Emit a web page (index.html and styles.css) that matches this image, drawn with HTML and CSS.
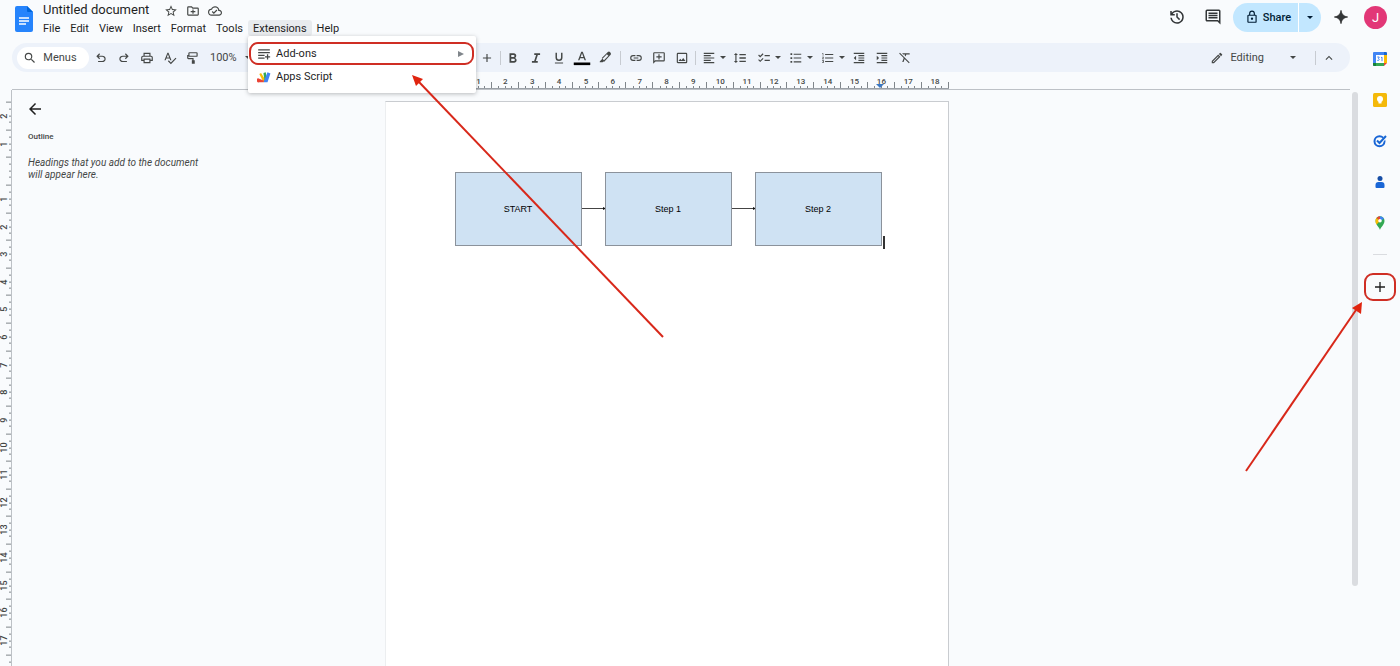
FILE: index.html
```html
<!DOCTYPE html>
<html lang="en">
<head>
<meta charset="utf-8">
<meta name="viewport" content="width=device-width, initial-scale=1">
<title>Untitled document</title>
<link rel="stylesheet" href="styles.css">
</head>
<body>
<div class="app">
  <header class="header">
    <a class="logo" href="#" aria-label="Docs home">
      <svg viewBox="0 0 18 26" width="18" height="26"><path fill="#2684fc" d="M2 0h10l6 6v18a2 2 0 0 1-2 2H2a2 2 0 0 1-2-2V2a2 2 0 0 1 2-2z"/><path fill="#0066da" d="M12 0l6 6h-5a1 1 0 0 1-1-1z"/><path stroke="#fff" stroke-width="1.4" d="M4 12h10M4 15h10M4 18h7"/></svg>
    </a>
    <div class="heading">
      <div class="title-row">
        <h1 class="title">Untitled document</h1>
        <button class="tiny" aria-label="Star"><svg class="ic14" viewBox="0 0 24 24"><path d="M22 9.24l-7.19-.62L12 2 9.19 8.63 2 9.24l5.46 4.73L5.82 21 12 17.27 18.18 21l-1.63-7.03L22 9.24zM12 15.4l-3.76 2.27 1-4.28-3.32-2.88 4.38-.38L12 6.1l1.71 4.04 4.38.38-3.32 2.88 1 4.28L12 15.4z"/></svg></button>
        <button class="tiny" aria-label="Move"><svg class="ic14" viewBox="0 0 24 24"><path d="M20 6h-8l-2-2H4a2 2 0 0 0-2 2v12a2 2 0 0 0 2 2h16a2 2 0 0 0 2-2V8a2 2 0 0 0-2-2zm0 12H4V6h5.2l2 2H20zM11 9.500h2V12h3v2h-3v2.500h-2V14H8v-2h3z"/></svg></button>
        <button class="tiny" aria-label="Document status"><svg class="ic14" viewBox="0 0 24 24"><path d="M19.350 10.040A7.490 7.490 0 0 0 12 4C9.110 4 6.600 5.640 5.350 8.040A5.994 5.994 0 0 0 0 14c0 3.310 2.690 6 6 6h13c2.760 0 5-2.240 5-5 0-2.640-2.050-4.780-4.650-4.960zM19 18H6c-2.210 0-4-1.790-4-4s1.790-4 4-4h.71A5.500 5.500 0 0 1 17.500 11.500v.5H19c1.660 0 3 1.340 3 3s-1.340 3-3 3zM10 14.200l-2.100-2.100-1.400 1.400L10 17l6-6-1.400-1.400z"/></svg></button>
      </div>
      <nav class="menubar" aria-label="Menu bar">
        <button class="menu">File</button>
        <button class="menu">Edit</button>
        <button class="menu">View</button>
        <button class="menu">Insert</button>
        <button class="menu">Format</button>
        <button class="menu">Tools</button>
        <div class="menu-wrap">
          <button class="menu menu-open" aria-expanded="true">Extensions</button>
          <div class="dropdown" role="menu">
            <button class="entry entry-marked" role="menuitem">
              <svg class="ic14" viewBox="0 0 24 24"><path d="M2 4h20v2.200H2zM2 8.700h20v2.200H2zM2 13.400h11v2.200H2zM2 18h11v2.200H2zM17 12.500h2.200v3.300h3.300V18h-3.300v3.300H17V18h-3.300v-2.200H17z"/></svg>
              <span>Add-ons</span>
              <svg class="arrow" viewBox="0 0 6 6" width="6" height="6"><path d="M0 0l6 3-6 3z"/></svg>
            </button>
            <button class="entry" role="menuitem">
              <svg class="ic14" viewBox="0 0 24 24"><path fill="#fbbc04" d="M4 7l3-2 8 13-4 3z"/><path fill="#34a853" d="M11 5l4-1 2 12-4 3z"/><path fill="#4285f4" d="M18 4l5 2-5 15h-7z"/><path fill="#ea4335" d="M2 14l10 4.500-1 2.500H4a3 3 0 0 1-2-7z"/></svg>
              <span>Apps Script</span>
            </button>
          </div>
        </div>
        <button class="menu">Help</button>
      </nav>
    </div>
    <div class="actions">
      <button class="action" aria-label="Version history"><svg class="ic18" viewBox="0 0 24 24"><path d="M12 21q-3.450 0-6.012-2.287T3.050 13H5.100q.35 2.600 2.313 4.300T12 19q2.925 0 4.963-2.037T19 12t-2.037-4.962T12 5q-1.725 0-3.225.8T6.250 8H9v2H3V4h2v2.350q1.275-1.600 3.113-2.475T12 3q1.875 0 3.513.713t2.850 1.924 1.925 2.850T21 12t-.712 3.513-1.925 2.850-2.850 1.925T12 21m2.800-4.800L11 12.400V7h2v4.600l3.200 3.200z"/></svg></button>
      <button class="action" aria-label="Comments"><svg class="ic18" viewBox="0 0 24 24"><path d="M22 4a2 2 0 0 0-2-2H4a2 2 0 0 0-2 2v12c0 1.100.9 2 2 2h14l4 4zm-2 13.200L18.800 16H4V4h16zM6 12h12v2H6zm0-3h12v2H6zm0-3h12v2H6z"/></svg></button>
      <div class="share">
        <button class="share-main"><svg class="ic14" viewBox="0 0 24 24"><path d="M18 8h-1V6A5 5 0 0 0 7 6v2H6a2 2 0 0 0-2 2v10c0 1.100.9 2 2 2h12a2 2 0 0 0 2-2V10a2 2 0 0 0-2-2zM9 6a3 3 0 0 1 6 0v2H9zm9 14H6V10h12zm-6-3a2 2 0 1 0 0-4 2 2 0 0 0 0 4z"/></svg>Share</button>
        <button class="share-more" aria-label="Sharing options"><i class="caret"></i></button>
      </div>
      <button class="action" aria-label="Gemini"><svg class="ic16" viewBox="0 0 24 24"><path d="M12 2c.8 6 4 9.200 10 10-6 .8-9.200 4-10 10-.8-6-4-9.200-10-10 6-.8 9.200-4 10-10z" stroke="#1f1f1f"/></svg></button>
      <button class="avatar" aria-label="Account">J</button>
    </div>
  </header>

  <div class="body">
    <main class="main">
      <div class="toolbar" role="toolbar" aria-label="Formatting">
        <button class="search"><svg class="ic14" viewBox="0 0 24 24"><path d="M15.500 14h-.79l-.28-.27A6.470 6.470 0 0 0 16 9.500 6.500 6.500 0 1 0 9.500 16c1.610 0 3.090-.59 4.230-1.570l.27.28v.79l5 4.990L20.490 19zm-6 0a4.500 4.500 0 1 1 0-9 4.500 4.500 0 0 1 0 9z"/></svg>Menus</button>
        <button class="tool" aria-label="Undo"><svg class="ic14" viewBox="0 0 24 24"><path d="M7 19v-2h7.100q1.575 0 2.738-1T18 13.500 16.838 11 14.100 10H7.800l2.600 2.600L9 14 4 9l5-5 1.400 1.400L7.800 8h6.300q2.425 0 4.163 1.575T20 13.500t-1.737 3.925T14.100 19z"/></svg></button>
        <button class="tool" aria-label="Redo"><svg class="ic14" viewBox="0 0 24 24"><path d="M17 19v-2H9.900q-1.575 0-2.738-1T6 13.500 7.162 11 9.900 10h6.300l-2.600 2.600L15 14l5-5-5-5-1.400 1.400L16.200 8H9.900q-2.425 0-4.163 1.575T4 13.500t1.737 3.925T9.900 19z"/></svg></button>
        <button class="tool" aria-label="Print"><svg class="ic14" viewBox="0 0 24 24"><path d="M19 8h-1V3H6v5H5a3 3 0 0 0-3 3v6h4v4h12v-4h4v-6a3 3 0 0 0-3-3zM8 5h8v3H8zm8 14H8v-4h8zm2-4v-2H6v2H4v-4a1 1 0 0 1 1-1h14a1 1 0 0 1 1 1v4z"/></svg></button>
        <button class="tool" aria-label="Spelling check"><svg class="ic14" viewBox="0 0 24 24"><path d="M12.450 16h2.090L9.430 3H7.570L2.460 16h2.090l1.120-3h5.640zm-6.020-5L8.500 5.480 10.570 11zM21.590 11.590l-8.090 8.090L9.830 16l-1.410 1.410 5.090 5.090L23 13z"/></svg></button>
        <button class="tool" aria-label="Paint format"><svg class="ic14" viewBox="0 0 24 24"><path d="M18 2H6a2 2 0 0 0-2 2v4a2 2 0 0 0 2 2h12a2 2 0 0 0 2-2h0V4a2 2 0 0 0-2-2zm0 6H6V4h12zM2 5h2v2H2zM2 5v7a2 2 0 0 0 2 2h7v2h-1v6h5v-6h-2v-4H4V5z"/></svg></button>
        <button class="zoom">100%<i class="caret"></i></button>
        <div class="gap"></div>
        <button class="tool" aria-label="Increase font size"><svg class="ic14" viewBox="0 0 24 24"><path d="M19 13h-6v6h-2v-6H5v-2h6V5h2v6h6z"/></svg></button>
        <span class="sep"></span>
        <button class="tool" aria-label="Bold"><svg class="ic14" viewBox="0 0 24 24"><path d="M15.600 11.790A4.200 4.200 0 0 0 17.600 8.300C17.600 5.900 15.800 4 13.300 4H6v16h7.900c2.300 0 4.300-1.900 4.300-4.300 0-1.700-1-3.200-2.600-3.910zM9 6.700h3.800a1.800 1.800 0 0 1 0 3.600H9zm4.300 10.500H9v-3.900h4.300a1.950 1.950 0 0 1 0 3.900z"/></svg></button>
        <button class="tool" aria-label="Italic"><svg class="ic14" viewBox="0 0 24 24"><path d="M9 4v2.700h3.200L8.800 17.300H5V20h10v-2.700h-3.200l3.400-10.600H19V4z"/></svg></button>
        <button class="tool" aria-label="Underline"><svg class="ic14" viewBox="0 0 24 24"><path d="M12 17a6 6 0 0 0 6-6V3h-2.500v8a3.500 3.500 0 0 1-7 0V3H6v8a6 6 0 0 0 6 6zM5 19.500v2h14v-2z"/></svg></button>
        <button class="tool" aria-label="Text color"><svg class="ic18" viewBox="0 0 24 24"><path d="M6.700 15h1.900l1-2.700h4.800l1 2.700h1.900L13 3.500h-2zm3.500-4.300L12 5.700l1.800 5z"/><path fill="#000" d="M1 18h22v3.500H1z"/></svg></button>
        <button class="tool" aria-label="Highlight color"><svg class="ic14 lift" viewBox="0 0 24 24"><path d="M20.500 3.500a2.500 2.500 0 0 0-3.600 0L6.500 13.800l.9 1.400L3 19.600V21h5l1.500-1.500 1.200.5L20.500 9.500a4 4 0 0 0 0-6zm-10.300 14l-2.500-2.600 7.500-7.500 2.600 2.600z"/></svg></button>
        <span class="sep sep-wide"></span>
        <button class="tool" aria-label="Insert link"><svg class="ic14" viewBox="0 0 24 24"><path d="M3.900 12A3.100 3.100 0 0 1 7 8.900h4V7H7a5 5 0 0 0 0 10h4v-1.900H7A3.100 3.100 0 0 1 3.900 12zM8 13h8v-2H8zm9-6h-4v1.900h4a3.100 3.100 0 0 1 0 6.200h-4V17h4a5 5 0 0 0 0-10z"/></svg></button>
        <button class="tool" aria-label="Add comment"><svg class="ic14" viewBox="0 0 24 24"><path d="M20 2H4a2 2 0 0 0-2 2v18l4-4h14a2 2 0 0 0 2-2V4a2 2 0 0 0-2-2zm0 14H5.200L4 17.200V4h16zM11 5.500h2V9h3.500v2H13v3.500h-2V11H7.500V9H11z"/></svg></button>
        <button class="tool" aria-label="Insert image"><svg class="ic14" viewBox="0 0 24 24"><path d="M19 5v14H5V5zm0-2H5a2 2 0 0 0-2 2v14c0 1.100.9 2 2 2h14a2 2 0 0 0 2-2V5a2 2 0 0 0-2-2zm-4.900 8.900l-3 3.800L9 13.200 6 17h12z"/></svg></button>
        <span class="sep"></span>
        <button class="tool tool-menu" aria-label="Align"><svg class="ic14" viewBox="0 0 24 24"><path d="M3 3h18v2H3zm0 4h12v2H3zm0 4h18v2H3zm0 4h12v2H3zm0 4h18v2H3z"/></svg><i class="caret"></i></button>
        <button class="tool" aria-label="Line spacing"><svg class="ic14" viewBox="0 0 24 24"><path d="M6 7h2.500L5 3.500 1.500 7H4v10H1.500L5 20.500 8.500 17H6zm5-2v2.200h11V5zm0 14h11v-2.200H11zm0-5.900h11v-2.200H11z"/></svg></button>
        <button class="tool tool-menu" aria-label="Checklist"><svg class="ic14" viewBox="0 0 24 24"><path d="M22 7h-9v2h9zm0 8h-9v2h9zM5.500 11L2 7.500l1.400-1.400 2.100 2.100 4.300-4.200 1.400 1.400zm0 8L2 15.500l1.400-1.400 2.100 2.100 4.300-4.200 1.400 1.400z"/></svg><i class="caret"></i></button>
        <button class="tool tool-menu" aria-label="Bulleted list"><svg class="ic14" viewBox="0 0 24 24"><path d="M2.500 4h3v3h-3zm0 6.500h3v3h-3zm0 6.500h3v3h-3zM8 4.500h13v2H8zM8 11h13v2H8zm0 6.500h13v2H8z"/></svg><i class="caret"></i></button>
        <button class="tool tool-menu" aria-label="Numbered list"><svg class="ic14" viewBox="0 0 24 24"><path d="M2 17h2v.5H3v1h1v.5H2v1h3v-4H2zm1-9h1V4H2v1h1zm-1 3h1.800L2 13.100v.9h3v-1H3.200L5 10.900V10H2zm5-6v2h14V5zm0 14h14v-2H7zm0-6h14v-2H7z"/></svg><i class="caret"></i></button>
        <button class="tool" aria-label="Decrease indent"><svg class="ic14" viewBox="0 0 24 24"><path d="M11 17h10v-2H11zm-8-5l4 4V8zm0 9h18v-2H3zM3 3v2h18V3zm8 6h10V7H11zm0 4h10v-2H11z"/></svg></button>
        <button class="tool" aria-label="Increase indent"><svg class="ic14" viewBox="0 0 24 24"><path d="M3 21h18v-2H3zM3 8v8l4-4zm8 9h10v-2H11zM3 3v2h18V3zm8 6h10V7H11zm0 4h10v-2H11z"/></svg></button>
        <button class="tool" aria-label="Clear formatting"><svg class="ic14" viewBox="0 0 24 24"><path d="M20 6V4H7l2 2h3.100l-.6 1.900 1.500 1.500L14.200 6zM3.300 3L2 4.300l7.800 7.800L7.300 19h2.200l1.900-5.300L18.700 21l1.300-1.300z"/></svg></button>
        <button class="mode"><svg class="ic14" viewBox="0 0 24 24"><path d="M3 17.200V21h3.800L17.900 9.900l-3.800-3.800zM20.700 7c.4-.4.4-1 0-1.400l-2.300-2.300a1 1 0 0 0-1.400 0l-1.800 1.800L19 8.900zM6 19H5v-1l9-9 1 1z"/></svg><span>Editing</span><i class="caret"></i></button>
        <span class="sep"></span>
        <button class="tool" aria-label="Hide the menus"><svg class="ic14" viewBox="0 0 24 24"><path d="M12 8l-6 6 1.400 1.400 4.600-4.600 4.600 4.600L18 14z"/></svg></button>
      </div>

      <div class="ruler-row">
        <div class="ruler">
          <span></span><span></span><span></span><span>1</span><span>2</span><span>3</span><span>4</span><span>5</span><span>6</span><span>7</span><span>8</span><span>9</span><span>10</span><span>11</span><span>12</span><span>13</span><span>14</span><span>15</span><span class="marked">16</span><span>17</span><span>18</span>
        </div>
      </div>

      <div class="workspace">
        <div class="side-ruler">
          <div class="side-scale">
            <span>2</span><span>1</span><span></span><span>1</span><span>2</span><span>3</span><span>4</span><span>5</span><span>6</span><span>7</span><span>8</span><span>9</span><span>10</span><span>11</span><span>12</span><span>13</span><span>14</span><span>15</span><span>16</span><span>17</span><span></span>
          </div>
        </div>
        <div class="canvas">
          <aside class="outline">
            <button class="back" aria-label="Close outline"><svg class="ic18" viewBox="0 0 24 24"><path d="M20 11H7.800l5.600-5.600L12 4l-8 8 8 8 1.400-1.400L7.800 13H20z"/></svg></button>
            <h2 class="outline-title">Outline</h2>
            <p class="outline-hint">Headings that you add to the document will appear here.</p>
          </aside>
          <article class="page">
            <div class="flow">
              <div class="node">START</div>
              <svg class="link" viewBox="0 0 24 6" width="24" height="6"><path d="M0 2.500h22" stroke="#444"/><path d="M21 1l3 1.500-3 1.500z" fill="#111"/></svg>
              <div class="node">Step 1</div>
              <svg class="link" viewBox="0 0 24 6" width="24" height="6"><path d="M0 2.500h22" stroke="#444"/><path d="M21 1l3 1.500-3 1.500z" fill="#111"/></svg>
              <div class="node">Step 2</div>
              <i class="cursor"></i>
            </div>
          </article>
        </div>
      </div>
    </main>

    <div class="scroll"><div class="thumb"></div></div>

    <aside class="rail" aria-label="Side panel">
      <button class="app-btn" aria-label="Calendar"><svg class="ic14" viewBox="0 0 14 14"><path fill="#4285f4" d="M1 0h12v3H3v11H1a1 1 0 0 1-1-1V1a1 1 0 0 1 1-1z"/><path fill="#1967d2" d="M11 0h2a1 1 0 0 1 1 1v2h-3z"/><path fill="#fbbc04" d="M11 3h3v8h-3z"/><path fill="#34a853" d="M3 11h8v3H3z"/><path fill="#188038" d="M0 11h3v3H1a1 1 0 0 1-1-1z"/><path fill="#ea4335" d="M11 11h3l-3 3z"/><path fill="#fff" d="M3 3h8v8H3z"/><path fill="none" stroke="#4285f4" d="M4.300 5h1.900L5.500 6.700c1.300.2.8 2.300-1.200 1.700M8 5.700l1-.5v4"/></svg></button>
      <button class="app-btn" aria-label="Keep"><svg class="ic14" viewBox="0 0 14 14"><rect width="14" height="14" rx="1.500" fill="#f4b90a"/><circle cx="7" cy="6" r="3" fill="#fff"/><path fill="#fff" d="M5.500 8h3v2.500h-3z"/></svg></button>
      <button class="app-btn" aria-label="Tasks"><svg class="ic14" viewBox="0 0 14 14"><circle cx="6.500" cy="7.300" r="5" fill="none" stroke="#1a66d6" stroke-width="2"/><path fill="none" stroke="#f9fbfd" stroke-width="3" d="M8 8l5-5"/><path fill="none" stroke="#1967d2" stroke-width="2" d="M4 6.500l2.500 2.500 6.500-7"/></svg></button>
      <button class="app-btn" aria-label="Contacts"><svg class="ic14" viewBox="0 0 14 14"><circle cx="7" cy="3.500" r="2.500" fill="#174ea6"/><path fill="#1a66d6" d="M2.500 10a3 3 0 0 1 3-3h3a3 3 0 0 1 3 3v2a1 1 0 0 1-1 1h-7a1 1 0 0 1-1-1z"/></svg></button>
      <button class="app-btn" aria-label="Maps"><svg class="ic14" viewBox="0 0 14 14"><path fill="#34a853" d="M7 14C6.500 11 2.500 9 2.500 4.700A4.500 4.500 0 0 1 7 .2a4.500 4.500 0 0 1 4.500 4.500C11.500 9 7.500 11 7 14z"/><path fill="#4285f4" d="M7 .2a4.500 4.500 0 0 1 4 2.500L7 5z"/><path fill="#ea4335" d="M3.500 1.900A4.500 4.500 0 0 1 7 .2V5z"/><path fill="#fbbc04" d="M2.500 4.700q0-1.600 1-2.800L7 5 3.500 8.500Q2.500 7 2.500 4.700z"/><circle cx="7" cy="4.700" r="1.800" fill="#fff"/></svg></button>
      <span class="rail-line"></span>
      <button class="get-addons" aria-label="Get add-ons"><svg class="ic16" viewBox="0 0 24 24"><path d="M19.500 13H13v6.500h-2V13H4.500v-2H11V4.500h2V11h6.500z"/></svg></button>
    </aside>
  </div>

  <svg class="pointer pointer-menu" viewBox="0 0 254 266" width="254" height="266"><path d="M251 263L7 8" stroke="#d8281a" stroke-width="2"/><path d="M0 1l11 4-7 7z" fill="#e0240f"/></svg>
  <svg class="pointer pointer-rail" viewBox="0 0 120 172" width="120" height="172"><path d="M2 170L112 9" stroke="#d8281a" stroke-width="2"/><path d="M118 1l-1 12-9-6z" fill="#e0240f"/></svg>
</div>
</body>
</html>
```
FILE: styles.css
```css
* { box-sizing: border-box; }

body {
  margin: 0;
  background: #f9fbfd;
  color: #1f1f1f;
  font-family: Roboto, "Liberation Sans", sans-serif;
  font-size: 11px;
}

button {
  display: flex;
  align-items: center;
  justify-content: center;
  margin: 0;
  padding: 0;
  border: 0;
  background: none;
  color: inherit;
  font: inherit;
}

svg { display: block; flex: none; fill: currentColor; }
h1, h2, p { margin: 0; font-weight: 400; }

.ic14 { width: 14px; height: 14px; }
.ic16 { width: 16px; height: 16px; }
.ic18 { width: 18px; height: 18px; }
.lift { margin-bottom: 2px; }

.caret {
  border: 3px solid transparent;
  border-top-color: currentColor;
  border-bottom: 0;
}

.app {
  position: relative;
  display: flex;
  flex-direction: column;
  height: 100vh;
  overflow: hidden;
}

/* Header */
.header {
  display: flex;
  align-items: flex-start;
  height: 38px;
  padding: 0 13px 0 15px;
}
.logo { display: block; padding-top: 6px; }
.heading { margin-left: 5px; }
.title-row { display: flex; align-items: center; height: 20px; gap: 8px; padding-left: 5px; }
.title { margin-right: 7px; font-size: 13px; line-height: 20px; white-space: nowrap; }
.tiny { padding-top: 2px; color: #444746; }
.menubar { display: flex; }
.menu { height: 16px; padding: 0 5px; border-radius: 3px; }
.menu-open { background: #e8ebee; }
.menu-wrap { position: relative; }

.dropdown {
  position: absolute;
  z-index: 5;
  top: 16px;
  left: 0;
  width: 228px;
  padding: 6px 2px 5px 1px;
  background: #fff;
  border-radius: 2px;
  box-shadow: 0 1px 4px rgba(60, 64, 67, 0.35);
}
.entry {
  width: 100%;
  height: 23px;
  gap: 5px;
  padding: 0 10px 0 8px;
  justify-content: flex-start;
}
.entry svg { color: #444746; }
.entry-marked {
  border: 2px solid #cf2e24;
  border-radius: 9px;
  padding: 0 8px 0 6px;
}
.entry .arrow { margin-left: auto; color: #80868b; }

.actions { display: flex; align-items: center; height: 34px; margin-left: auto; }
.action { width: 36px; height: 28px; color: #333638; }
.share {
  display: flex;
  width: 88px;
  height: 29px;
  margin: 0 2px;
  border-radius: 15px;
  overflow: hidden;
  background: #c2e7ff;
  color: #001d35;
}
.share-main { width: 65px; gap: 4px; padding-left: 5px; font-weight: 500; }
.share-more { flex: 1; border-left: 1px solid #fff; }
.avatar {
  width: 23px;
  height: 23px;
  margin-left: 5px;
  border-radius: 50%;
  background: #e23777;
  color: #fff;
  font-size: 13px;
}

/* Columns below the header */
.body { display: flex; flex: 1; min-height: 0; }
.main { display: flex; flex: 1; flex-direction: column; min-width: 0; padding-top: 5px; }

.toolbar {
  display: flex;
  align-items: center;
  height: 29px;
  margin-left: 12px;
  padding: 0 10px 0 5px;
  border-radius: 15px;
  background: #edf2fa;
  color: #444746;
}
.search { width: 72px; height: 22px; gap: 6px; padding-right: 6px; border-radius: 11px; background: #fff; }
.tool { width: 23px; height: 23px; }
.tool-menu { width: 32px; gap: 4px; padding-left: 5px; justify-content: flex-start; }
.zoom { gap: 8px; padding-left: 6px; }
.gap { width: 225px; }
.sep { width: 1px; height: 14px; margin: 0 1px; background: #c7cbd1; }
.sep-wide { margin: 0 4px 0 3px; }
.mode { gap: 6px; margin-left: auto; margin-right: 18px; }
.mode .caret { margin-left: 20px; }

/* Each ruler unit has one tall tick at its end and three short ones inside */
.ruler-row {
  display: grid;
  grid-template-columns: 1fr 564px 1fr;
  height: 18px;
  margin-left: 12px;
  padding-right: 29px;
  border-bottom: 1px solid #bdc1c6;
}
.ruler { grid-column: 2; display: flex; border-bottom: 1px solid #9aa0a6; }
.ruler span, .side-scale span {
  position: relative;
  flex: 1;
  color: #444746;
  font-size: 8px;
  font-weight: 500;
  text-align: center;
}
.ruler span {
  padding-top: 4px;
  line-height: 12px;
  background:
    linear-gradient(#80868b, #80868b) 100% 100% / 1px 6px no-repeat,
    linear-gradient(#80868b, #80868b) 25% 100% / 1px 2px no-repeat,
    linear-gradient(#80868b, #80868b) 50% 100% / 1px 2px no-repeat,
    linear-gradient(#80868b, #80868b) 75% 100% / 1px 2px no-repeat;
}
.ruler .marked::after {
  content: "";
  position: absolute;
  bottom: 0;
  left: 8px;
  border: 4px solid transparent;
  border-top-color: #3b78c3;
  border-bottom: 0;
}

.workspace { display: flex; flex: 1; min-height: 0; }
.side-ruler { width: 12px; padding-top: 12px; border-right: 1px solid #bdc1c6; overflow: hidden; }
.side-scale { display: flex; flex-direction: column; height: 580px; }
.side-scale span {
  writing-mode: vertical-rl;
  transform: rotate(180deg);
  font-size: 9px;
  line-height: 8px;
  padding-left: 3px;
  background:
    linear-gradient(#80868b, #80868b) 0 100% / 5px 1px no-repeat,
    linear-gradient(#80868b, #80868b) 0 25% / 2px 1px no-repeat,
    linear-gradient(#80868b, #80868b) 0 50% / 2px 1px no-repeat,
    linear-gradient(#80868b, #80868b) 0 75% / 2px 1px no-repeat;
}

.canvas {
  display: grid;
  grid-template-columns: 1fr 564px 1fr;
  flex: 1;
  padding-right: 29px;
}
.outline { padding: 10px 16px 0 14px; color: #444746; }
.back { color: #1f1f1f; }
.outline-title { margin: 13px 0 0 2px; font-size: 8px; line-height: 12px; font-weight: 500; }
.outline-hint { width: 176px; margin: 14px 0 0 2px; font-size: 10px; line-height: 12px; font-style: italic; }

.page {
  margin-top: 11px;
  padding: 70px 0 0 69px;
  background: #fff;
  border: 1px solid #c9ccd0;
  border-bottom: 0;
  border-left-color: #eceef0;
}
.flow { display: flex; align-items: center; }
.node {
  display: flex;
  align-items: center;
  justify-content: center;
  width: 127px;
  height: 74px;
  border: 1px solid #8b929b;
  background: #cfe2f3;
  color: #000;
  font-family: "Liberation Sans", Arial, sans-serif;
  font-size: 9px;
}
.link { width: 24px; margin-right: -1px; }
.cursor { align-self: flex-end; width: 2px; height: 13px; margin: 0 0 -3px 1px; background: #333; }

.scroll { width: 10px; padding: 54px 2px 0; }
.thumb { height: 86%; border-radius: 3px; background: #dadce0; }

.rail {
  display: flex;
  flex-direction: column;
  align-items: center;
  width: 40px;
}
.app-btn { width: 40px; height: 41px; }
.rail-line { width: 14px; height: 1px; margin: 11px 0 18px; background: #dadce0; }
.get-addons {
  width: 32px;
  height: 28px;
  border: 2px solid #cf2e24;
  border-radius: 9px;
}

/* Callout arrows laid over the editor */
.pointer { position: absolute; z-index: 10; pointer-events: none; }
.pointer-menu { top: 74px; left: 412px; }
.pointer-rail { top: 301px; right: 36px; }
```
